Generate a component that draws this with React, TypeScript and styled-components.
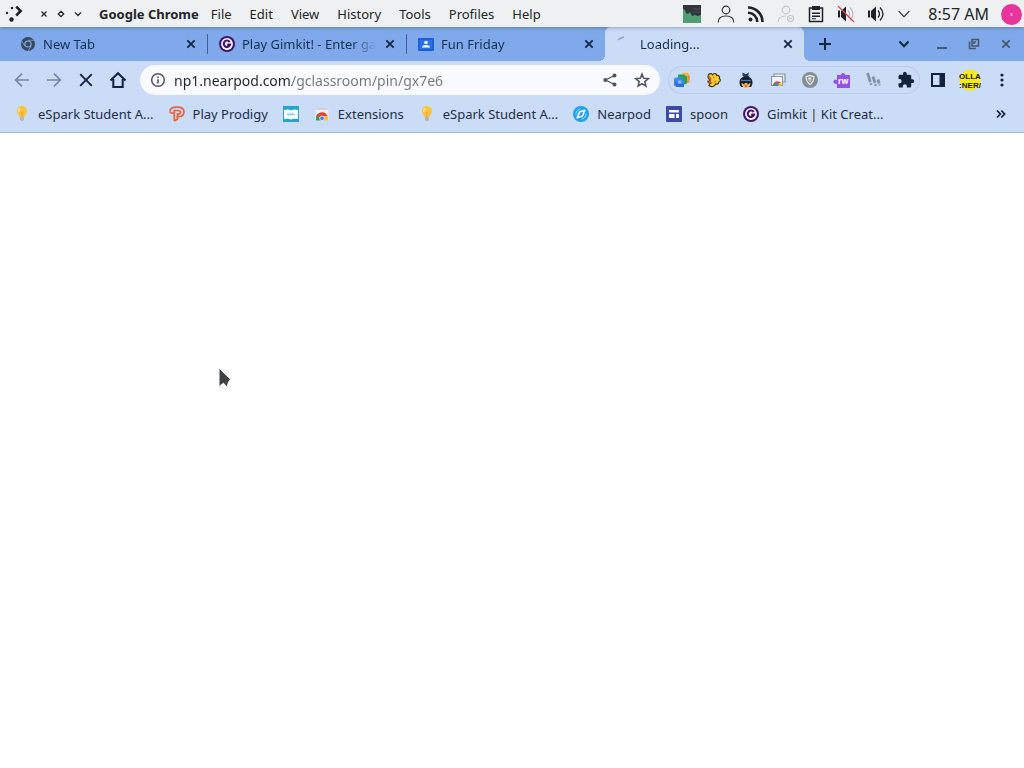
import type { ReactNode } from 'react'
import styled, { createGlobalStyle } from 'styled-components'

interface TabData {
  title: string
  icon: ReactNode
  active?: boolean
}

interface BookmarkData {
  label?: string
  name: string
  icon: ReactNode
}

// ---------- icons ----------

const ChromeIcon = () => (
  <svg width="16" height="16" viewBox="0 0 16 16">
    <circle cx="8" cy="8" r="7" fill="#34485f" />
    <path d="M8 4.200h6.500M4.700 9.900L1.700 4.700M11.300 9.900L8.200 15" stroke="#7ba3e3" strokeWidth=".8" />
    <circle cx="8" cy="8" r="3.600" fill="#8db2ea" />
    <circle cx="8" cy="8" r="2.500" fill="#34485f" />
  </svg>
)

const GimkitIcon = () => (
  <svg width="16" height="16" viewBox="0 0 16 16">
    <circle cx="8" cy="8" r="8" fill="#43156f" />
    <circle cx="8" cy="8" r="5.900" fill="#fff" />
    <path d="M10.700 6.100A3.200 3.200 0 1 0 11 8.600H8.200" fill="none" stroke="#43156f" strokeWidth="2.200" />
  </svg>
)

const ClassroomIcon = () => (
  <svg width="16" height="16" viewBox="0 0 16 16">
    <rect y="2" width="16" height="13" rx="1" fill="#1a62d6" />
    <rect x="2" y="4" width="12" height="9" fill="#2673e8" />
    <circle cx="8" cy="6.500" r="1.800" fill="#fff" />
    <path d="M4 11.500c0-2 2-2.600 4-2.600s4 .6 4 2.600z" fill="#fff" />
  </svg>
)

const SpinnerIcon = () => (
  <svg width="16" height="16" viewBox="0 0 16 16">
    <path d="M1 4Q3 2 7 1" fill="none" stroke="#8ba8da" strokeWidth="1.400" />
  </svg>
)

const BulbIcon = () => (
  <svg width="16" height="16" viewBox="0 0 16 16">
    <path d="M8 0C4.800 0 3 2.300 3 5c0 2.200 1.500 3.600 2.400 6h5.200C11.500 8.600 13 7.200 13 5c0-2.700-1.800-5-5-5z" fill="#fbc440" />
    <path d="M6 2.200C5 3 4.600 4.300 5 6" stroke="#ffe59a" strokeWidth="1.500" fill="none" />
    <path d="M8 6v5" stroke="#f19b2d" strokeWidth="1" />
    <path d="M6 11h4v2.500L9 15H7l-1-1.500z" fill="#b5b9bf" />
  </svg>
)

const ProdigyIcon = () => (
  <svg width="16" height="16" viewBox="0 0 16 16" fill="none" stroke="#ea6238">
    <path d="M1 5.500C1 2.500 4 1.200 8 1.200c4.300 0 7 1.300 7 4.500 0 3.300-2.700 5-6 5" strokeWidth="1.700" />
    <path d="M1 5.500c.2 1.800 1.800 2 4 1.200" strokeWidth="1.600" />
    <path d="M5.300 15V4.500h3.400c1.800 0 2.800.6 2.800 1.700S10.600 7.900 9 7.900H8.400v5.300L5.300 15" strokeWidth="1.700" />
  </svg>
)

const SkillsIcon = () => (
  <svg width="16" height="16" viewBox="0 0 16 16">
    <rect width="16" height="16" fill="#25a5c8" />
    <path d="M1 4C4 3 6.500 3.300 8 4.500 9.500 3.300 12 3 15 4v9c-3-.6-5.500-.3-7 .8-1.500-1.100-4-1.400-7-.8z" fill="#fff" />
    <path d="M4 8.500h8M5 7v2.500M7 6.500v3M9.500 6.500v3" stroke="#8bcfe0" strokeWidth="1" />
  </svg>
)

const WebStoreIcon = () => (
  <svg width="16" height="16" viewBox="0 0 16 16">
    <path d="M5 5V2.500h6V5" stroke="#c9ccd3" strokeWidth="1.200" fill="none" />
    <path d="M1.500 4h13v10.500h-13z" fill="#eceef2" />
    <path d="M2 13a6 6 0 0 1 11.500-3H8z" fill="#e2412f" />
    <path d="M2 14.500V12l2-3 3 5.500z" fill="#2f9e50" />
    <path d="M8 10h5.700c.5 1.500.4 3-.2 4.500H7.500z" fill="#f7bf2e" />
    <circle cx="8" cy="12.300" r="2.300" fill="#3f7ee8" stroke="#fff" strokeWidth=".7" />
  </svg>
)

const NearpodIcon = () => (
  <svg width="16" height="16" viewBox="0 0 16 16">
    <circle cx="8" cy="8" r="8" fill="#1ba1ee" />
    <path d="M6.500 6L11.800 4.200 9.500 10 4.200 11.800z" fill="none" stroke="#fff" strokeWidth="1.600" strokeLinejoin="round" />
    <path d="M3 8.500A5 5 0 0 1 7.500 3M13 7.500A5 5 0 0 1 8.500 13" fill="none" stroke="#b5e3fc" />
  </svg>
)

const SitesIcon = () => (
  <svg width="16" height="16" viewBox="0 0 16 16">
    <rect width="16" height="16" rx="1" fill="#3b4aa8" />
    <path d="M3 4h10v2.500H3zM3 8h5.500v4H3zM10 8h3v4h-3z" fill="#fff" />
  </svg>
)

const CloseIcon = ({ color = '#14273f' }: { color?: string }) => (
  <svg width="12" height="12" viewBox="0 0 12 12">
    <path d="M2.300 2.300l7.400 7.400M9.700 2.300L2.300 9.700" stroke={color} strokeWidth="1.800" />
  </svg>
)

const ArrowIcon = ({ forward }: { forward?: boolean }) => (
  <svg width="16" height="16" viewBox="0 0 16 16" fill="none" stroke="#7486a3" strokeWidth="1.700">
    {forward ? <path d="M1 8h13M8 1.700L14.300 8 8 14.300" /> : <path d="M15 8H2M8 1.700L1.700 8 8 14.300" />}
  </svg>
)

const StopIcon = () => (
  <svg width="16" height="16" viewBox="0 0 16 16">
    <path d="M2.200 2.200l11.600 11.600M13.800 2.200L2.200 13.800" stroke="#14233a" strokeWidth="1.900" />
  </svg>
)

const HomeIcon = () => (
  <svg width="18" height="18" viewBox="0 0 18 18" fill="none" stroke="#14233a" strokeWidth="2">
    <path d="M1.500 9.500L9 2.200l7.500 7.300M4.300 8v8h9.400V8" />
  </svg>
)

const InfoIcon = () => (
  <svg width="16" height="16" viewBox="0 0 16 16">
    <circle cx="8" cy="8" r="6.300" fill="none" stroke="#50555c" strokeWidth="1.500" />
    <path d="M8 7.200v4.300M8 4.500v1.600" stroke="#50555c" strokeWidth="1.600" />
  </svg>
)

const ShareIcon = () => (
  <svg width="16" height="16" viewBox="0 0 16 16" fill="#50555c">
    <path d="M12.500 3.500L3.500 8l9 4.500" fill="none" stroke="#50555c" strokeWidth="1.300" />
    <circle cx="12.500" cy="3.500" r="2" />
    <circle cx="3.300" cy="8" r="2" />
    <circle cx="12.500" cy="12.500" r="2" />
  </svg>
)

const StarIcon = () => (
  <svg width="16" height="16" viewBox="0 0 16 16">
    <path d="M8 2l1.700 4.200 4.600.4-3.500 3 1.100 4.500L8 11.700l-3.900 2.400 1.100-4.500-3.500-3 4.600-.4z" fill="none" stroke="#50555c" strokeWidth="1.500" />
  </svg>
)

const ChevronIcon = ({ size = 12, color = '#14273f', weight = 2 }: { size?: number; color?: string; weight?: number }) => (
  <svg width={size} height={size} viewBox="0 0 12 12">
    <path d="M1.500 3.500L6 8.300l4.500-4.800" fill="none" stroke={color} strokeWidth={weight} />
  </svg>
)

const PlusIcon = () => (
  <svg width="14" height="14" viewBox="0 0 14 14">
    <path d="M7 1v12M1 7h12" stroke="#14273f" strokeWidth="2" />
  </svg>
)

const extensions: { name: string; icon: ReactNode }[] = [
  {
    name: 'Classroom copy',
    icon: (
      <svg width="18" height="18" viewBox="0 0 18 18">
        <path d="M9 2l6-.5 2 4-1 6-4 1z" fill="#f9b934" />
        <path d="M14.500 4l2.500 1.500-1 6-2 .5z" fill="#f0893a" />
        <path d="M5 3.500h6l3 2v7l-4 1.500H5z" fill="#27a257" />
        <path d="M2.500 6.500H8L11 9v7H3.500L1 14.500V8z" fill="#3f87ee" />
        <path d="M1 10l2.500 6H11v-3.500H5z" fill="#2a70db" />
        <path d="M5 9.500h3.500v3H5z" fill="#8dbbf7" />
      </svg>
    ),
  },
  {
    name: 'Pixel helper',
    icon: (
      <svg width="16" height="16" viewBox="0 0 16 16">
        <path
          d="M2.500 2.500c2-1.500 3.500-1 4 .3 1.500-2 4.200-1.600 4.200.7 2-.5 3.600 1 2.600 2.900 1.700 1.100 1.300 3.300-.6 3.600.1 1.800-1.700 2.700-3.200 1.900-.8 2.900-4 3.500-6.500 1.600.2-1.300.8-1.900 1.500-2.300-1.700 0-2.700-.8-2.500-2 1.400.2 2-.3 2.200-1.200C2.500 7 1.500 5 2.500 2.500z"
          fill="#fccb2d"
          stroke="#453519"
          strokeWidth="1.200"
        />
        <path d="M2.500 4l2 2.500v3L2.500 11" fill="none" stroke="#cf5427" strokeWidth="1.400" />
        <path d="M7 5l1.500.7M9.500 8.500L8.500 10" stroke="#a87a23" strokeWidth="1.200" />
      </svg>
    ),
  },
  {
    name: 'Ninja',
    icon: (
      <svg width="16" height="18" viewBox="0 0 16 18">
        <path d="M4.500 1.500L8 3.200l3-2-.8 3.500H12L9 7H7L4.500 4.500z" fill="#283b55" />
        <path d="M1.500 11.500C1.500 7.500 4.500 5.500 8 5.500s6.500 2 6.500 6c0 2.500-1 4-2 4.500h-9c-1-.5-2-2-2-4.500z" fill="#17202d" />
        <path d="M3.500 12h9c0 2.900-2 5-4.500 5s-4.500-2.100-4.500-5z" fill="#f2b45b" />
        <path d="M3 9.500h10" stroke="#54789e" strokeWidth="1.200" />
        <path d="M4.500 12l2.200 1M11.500 12l-2.200 1" stroke="#17202d" strokeWidth="1.300" />
        <path d="M6.500 14.500h3L8 16z" fill="#a5322c" />
      </svg>
    ),
  },
  {
    name: 'Screen share',
    icon: (
      <svg width="16" height="16" viewBox="0 0 16 16">
        <path d="M4 4V2h11v8h-2" fill="#e6ecf4" stroke="#7a9a90" strokeWidth="1.200" />
        <path d="M1.500 4.500h11v9h-11z" fill="#f4f5f7" stroke="#8d989f" strokeWidth="1.200" />
        <path d="M3 14a4.500 4.500 0 0 1 8-3H7z" fill="#de4935" />
        <path d="M3 14l1.500-3L7 14z" fill="#35a056" />
        <path d="M7 11h4.500v3H7z" fill="#f5bb35" />
        <circle cx="7" cy="12.500" r="1.800" fill="#3e7fe5" />
      </svg>
    ),
  },
  {
    name: 'Shield',
    icon: (
      <svg width="16" height="16" viewBox="0 0 16 16">
        <circle cx="8" cy="8" r="8" fill="#858e91" />
        <path d="M8 2.700l4.500 1.500c0 4.300-1.400 7-4.500 9-3.100-2-4.500-4.700-4.500-9z" fill="#eef0f2" />
        <path d="M8 4.800l2.700.9c0 2.400-.9 4-2.700 5.400-1.800-1.400-2.700-3-2.700-5.400z" fill="none" stroke="#858e91" strokeWidth="1.200" />
        <path d="M6.500 7.200L8 8.700l2-2.500" fill="none" stroke="#858e91" />
      </svg>
    ),
  },
  {
    name: 'Read and write',
    icon: (
      <svg width="18" height="18" viewBox="0 0 18 18">
        <path d="M4 4h4a2 2 0 1 1 4 0h5v13H4v-4.500a2.200 2.200 0 1 1 0-3.500z" fill="#9550e6" />
        <text x="5" y="13" fontFamily="Noto Sans" fontSize="8" fontWeight="700" fill="#fff">rw</text>
      </svg>
    ),
  },
  {
    name: 'Notes',
    icon: (
      <svg width="16" height="16" viewBox="0 0 16 16" fill="none" stroke="#8493a3" strokeWidth="2.800">
        <path d="M1.500 1l2.800 9M7 4.500l2 6.500M12 7.500l1.200 4" />
        <path d="M4.700 11.200l.5 1.600M9.300 12.200l.5 1.600M13.400 12.500l.3 1" strokeWidth="2.400" />
      </svg>
    ),
  },
  {
    name: 'Extensions',
    icon: (
      <svg width="18" height="18" viewBox="0 0 24 24">
        <path
          d="M20.500 11H19V7c0-1.100-.9-2-2-2h-4V3.500a2.500 2.500 0 0 0-5 0V5H4c-1.100 0-2 .9-2 2v3.800h1.500a2.700 2.700 0 0 1 0 5.400H2V20c0 1.100.9 2 2 2h3.800v-1.500a2.700 2.700 0 0 1 5.400 0V22H17c1.100 0 2-.9 2-2v-4h1.500a2.500 2.500 0 0 0 0-5z"
          fill="#14233a"
        />
      </svg>
    ),
  },
]

const trayIcons: { name: string; icon: ReactNode }[] = [
  {
    name: 'User',
    icon: (
      <svg width="18" height="18" viewBox="0 0 18 18" fill="none" stroke="#303437" strokeWidth="1.200">
        <circle cx="9" cy="5" r="3.800" />
        <path d="M1.200 17.500c0-4.500 3.300-6.500 7.800-6.500s7.800 2 7.800 6.500" />
      </svg>
    ),
  },
  {
    name: 'Feeds',
    icon: (
      <svg width="16" height="16" viewBox="0 0 16 16" fill="none" stroke="#202326" strokeWidth="2.600">
        <circle cx="2.500" cy="13.500" r="2" fill="#202326" stroke="none" />
        <path d="M0 6.800A9 9 0 0 1 9.200 16M0 1.500A14.500 14.500 0 0 1 14.500 16" />
      </svg>
    ),
  },
  {
    name: 'Account offline',
    icon: (
      <svg width="18" height="18" viewBox="0 0 18 18" fill="none" stroke="#c4c6c8" strokeWidth="1.200">
        <circle cx="9" cy="5" r="3.800" />
        <path d="M1.200 17c0-4.500 3.300-6 7.800-6" />
        <circle cx="13.500" cy="13.500" r="3" />
        <path d="M12 13.500h3" />
      </svg>
    ),
  },
  {
    name: 'Clipboard',
    icon: (
      <svg width="16" height="18" viewBox="0 0 16 18">
        <path d="M1.500 3h13v13.500h-13z" fill="none" stroke="#202326" strokeWidth="1.500" />
        <path d="M4 1h8v4H4zM4 7.500h8V9H4zM4 10.500h8V12H4zM4 13.200h4v1H4z" fill="#202326" />
      </svg>
    ),
  },
  {
    name: 'Microphone muted',
    icon: (
      <svg width="18" height="18" viewBox="0 0 18 18">
        <path d="M1 5.500h2v7H1zM4 6l5-4.500v15L4 12z" fill="#202326" />
        <path d="M11 5.500q3 3.500 0 7M13 2.500q6 6.500 0 13" fill="none" stroke="#b7b9bb" strokeWidth="1.200" />
        <path d="M1 1l16 16" stroke="#da4453" strokeWidth="1.300" />
      </svg>
    ),
  },
  {
    name: 'Volume',
    icon: (
      <svg width="18" height="18" viewBox="0 0 18 18">
        <path d="M1 5.500h2v7H1zM4 6l5-4.500v15L4 12z" fill="#202326" />
        <path d="M11 5.500q3 3.500 0 7M13 2.500q6 6.500 0 13" fill="none" stroke="#202326" strokeWidth="1.300" />
      </svg>
    ),
  },
]

// ---------- data ----------

const menus = ['File', 'Edit', 'View', 'History', 'Tools', 'Profiles', 'Help']

const tabs: TabData[] = [
  { title: 'New Tab', icon: <ChromeIcon /> },
  { title: 'Play Gimkit! - Enter game', icon: <GimkitIcon /> },
  { title: 'Fun Friday', icon: <ClassroomIcon /> },
  { title: 'Loading...', icon: <SpinnerIcon />, active: true },
]

const bookmarks: BookmarkData[] = [
  { name: 'eSpark', label: 'eSpark Student A...', icon: <BulbIcon /> },
  { name: 'Prodigy', label: 'Play Prodigy', icon: <ProdigyIcon /> },
  { name: 'Skills', icon: <SkillsIcon /> },
  { name: 'Extensions', label: 'Extensions', icon: <WebStoreIcon /> },
  { name: 'eSpark', label: 'eSpark Student A...', icon: <BulbIcon /> },
  { name: 'Nearpod', label: 'Nearpod', icon: <NearpodIcon /> },
  { name: 'spoon', label: 'spoon', icon: <SitesIcon /> },
  { name: 'Gimkit', label: 'Gimkit | Kit Creat...', icon: <GimkitIcon /> },
]

export default function App() {
  return (
    <Screen>
      <GlobalStyle />

      <MenuBar>
        <Launcher aria-label="Launcher">
          <svg width="18" height="18" viewBox="0 0 18 18" fill="#202326">
            <circle cx="7" cy="3" r="1.300" />
            <circle cx="2" cy="8" r="1.200" />
            <circle cx="6.500" cy="14.500" r="2.200" />
            <path d="M10.300 2.500l1.800-1.800L17.500 6l-5.400 5.400-1.800-1.800L13.700 6z" />
          </svg>
        </Launcher>
        <WindowButtons>
          <SmallButton aria-label="Close">
            <svg width="8" height="8" viewBox="0 0 8 8"><path d="M1.500 1.500l5 5M6.500 1.500l-5 5" stroke="#202326" strokeWidth="1.200" /></svg>
          </SmallButton>
          <SmallButton aria-label="Restore">
            <svg width="8" height="8" viewBox="0 0 8 8"><path d="M4 1.300L6.700 4 4 6.700 1.300 4z" fill="none" stroke="#202326" strokeWidth="1.300" /></svg>
          </SmallButton>
          <SmallButton aria-label="Minimize"><ChevronIcon size={8} color="#202326" /></SmallButton>
        </WindowButtons>
        <AppName>Google Chrome</AppName>
        <MenuList>
          {menus.map((m) => <MenuItem key={m}>{m}</MenuItem>)}
        </MenuList>
        <Tray>
          <Monitor aria-label="System load">
            <svg width="20" height="20" viewBox="0 0 20 20">
              <rect x="1" y="1" width="18" height="18" fill="#31363b" />
              <path d="M1 5l2 1 1 3 2 1 2-2 2 4 3-1 3 1 3-1v8H1z" fill="#4f9e74" />
              <path d="M11 5h7M11 8h7" stroke="#4b5055" />
            </svg>
          </Monitor>
          {trayIcons.map((t) => <TrayButton key={t.name} aria-label={t.name}>{t.icon}</TrayButton>)}
          <TrayButton aria-label="More" $narrow><ChevronIcon size={14} color="#303437" weight={1} /></TrayButton>
          <Clock>8:57 AM</Clock>
          <Avatar aria-label="Account">s</Avatar>
        </Tray>
      </MenuBar>

      <TabStrip>
        {tabs.map((t, i) => (
          <Tab key={t.title} $active={t.active} $divided={i > 0 && !t.active}>
            {t.icon}
            <TabTitle>{t.title}</TabTitle>
            <TabClose aria-label={`Close ${t.title}`}><CloseIcon /></TabClose>
          </Tab>
        ))}
        <NewTab aria-label="New tab"><PlusIcon /></NewTab>
        <StripControls>
          <StripButton aria-label="Search tabs" $wide><ChevronIcon /></StripButton>
          <StripButton aria-label="Minimize">
            <svg width="12" height="12" viewBox="0 0 12 12"><path d="M1 10h10" stroke="#47586a" strokeWidth="2" /></svg>
          </StripButton>
          <StripButton aria-label="Restore">
            <svg width="12" height="12" viewBox="0 0 12 12" fill="none" stroke="#47586a" strokeWidth="1.600">
              <path d="M4 1.500h6.500V8H4zM1.500 3.500v7H8M6 6V4h2" />
            </svg>
          </StripButton>
          <StripButton aria-label="Close window"><CloseIcon color="#47586a" /></StripButton>
        </StripControls>
      </TabStrip>

      <Toolbar>
        <ToolButton aria-label="Back"><ArrowIcon /></ToolButton>
        <ToolButton aria-label="Forward"><ArrowIcon forward /></ToolButton>
        <ToolButton aria-label="Stop"><StopIcon /></ToolButton>
        <ToolButton aria-label="Home"><HomeIcon /></ToolButton>
        <AddressBar>
          <ToolButton aria-label="Site information"><InfoIcon /></ToolButton>
          <UrlInput aria-label="Address" defaultValue="np1.nearpod.com/gclassroom/pin/gx7e6" spellCheck={false} />
          <ToolButton aria-label="Share"><ShareIcon /></ToolButton>
          <ToolButton aria-label="Bookmark"><StarIcon /></ToolButton>
        </AddressBar>
        <ExtensionGroup>
          {extensions.map((e) => <ToolButton key={e.name} aria-label={e.name}>{e.icon}</ToolButton>)}
        </ExtensionGroup>
        <ToolButton aria-label="Side panel">
          <svg width="16" height="16" viewBox="0 0 16 16">
            <path d="M2 2h12v12H2z" fill="none" stroke="#14233a" strokeWidth="2" />
            <path d="M9.500 2H14v12H9.500z" fill="#14233a" />
          </svg>
        </ToolButton>
        <ToolButton aria-label="Profile">
          <svg width="22" height="22" viewBox="0 0 22 22">
            <circle cx="11" cy="11" r="10.500" fill="#f7ea1e" />
            <text x="11" y="10" textAnchor="middle" fontFamily="Liberation Sans" fontSize="8" fontWeight="700" fill="#1c1c12">OLLA</text>
            <text x="11" y="19" textAnchor="middle" fontFamily="Liberation Sans" fontSize="8" fontWeight="700" fill="#1c1c12">:NER/</text>
          </svg>
        </ToolButton>
        <ToolButton aria-label="Menu">
          <svg width="4" height="14" viewBox="0 0 4 14" fill="#14233a">
            <circle cx="2" cy="2" r="1.600" />
            <circle cx="2" cy="7" r="1.600" />
            <circle cx="2" cy="12" r="1.600" />
          </svg>
        </ToolButton>
      </Toolbar>

      <BookmarkBar>
        {bookmarks.map((b, i) => (
          <Bookmark key={i} href="#" aria-label={b.name}>
            {b.icon}
            {b.label && <span>{b.label}</span>}
          </Bookmark>
        ))}
        <Overflow aria-label="More bookmarks">
          <svg width="10" height="10" viewBox="0 0 10 10">
            <path d="M1 1.500L4.300 5 1 8.500M5.300 1.500L8.600 5 5.300 8.500" fill="none" stroke="#14233a" strokeWidth="1.800" />
          </svg>
        </Overflow>
      </BookmarkBar>

      <Page>
        <Pointer width="14" height="22" viewBox="0 0 14 22">
          <path d="M1 1v18.500l4.500-3.300 3.500 4 1.500-5 2-3z" fill="#3f4245" stroke="#fff" strokeWidth="1" />
        </Pointer>
      </Page>
    </Screen>
  )
}

// ---------- styles ----------

const GlobalStyle = createGlobalStyle`
  * { box-sizing: border-box; }

  body {
    margin: 0;
    background: #fff;
    font-family: 'Noto Sans', sans-serif;
    font-size: 13px;
    color: #232629;
  }

  button {
    display: flex;
    align-items: center;
    justify-content: center;
    flex-shrink: 0;
    padding: 0;
    border: none;
    background: none;
    font: inherit;
    color: inherit;
  }

  svg { flex-shrink: 0; display: block; }
`

const Screen = styled.div`
  display: flex;
  flex-direction: column;
  min-height: 100vh;
`

const MenuBar = styled.header`
  display: flex;
  align-items: center;
  height: 27px;
  padding: 1px 2px 0 5px;
  background: #eff0f1;
  box-shadow: 0 0 4px rgba(20, 40, 80, 0.5);
  z-index: 1;
`

const Launcher = styled.button`
  width: 18px;
  height: 24px;
`

const WindowButtons = styled.div`
  display: flex;
  margin: 0 13px 0 12px;
`

const SmallButton = styled.button`
  width: 17px;
  height: 24px;
`

const AppName = styled.strong`
  white-space: nowrap;
`

const MenuList = styled.nav`
  display: flex;
  gap: 18px;
  margin-left: 12px;
`

const MenuItem = styled.button``

const Tray = styled.div`
  display: flex;
  align-items: center;
  margin-left: auto;
`

const Monitor = styled.button`
  width: 20px;
  margin-right: 9px;
`

const TrayButton = styled.button<{ $narrow?: boolean }>`
  width: ${(p) => (p.$narrow ? 26 : 30)}px;
  height: 24px;
`

const Clock = styled.time`
  margin: 0 12px 0 11px;
  font-size: 16px;
  line-height: 24px;
  white-space: nowrap;
`

const Avatar = styled.button`
  width: 21px;
  height: 21px;
  border-radius: 50%;
  background: #e8359c;
  color: #fbd0e8;
  font-size: 6px;
`

const TabStrip = styled.div`
  display: flex;
  align-items: center;
  height: 34px;
  padding: 0 2px 0 8px;
  background: #7fa9ea;
`

const Tab = styled.div<{ $active?: boolean; $divided?: boolean }>`
  position: relative;
  display: flex;
  align-items: center;
  flex: 0 1 199px;
  min-width: 0;
  height: ${(p) => (p.$active ? 34 : 20)}px;
  padding: 0 10px 0 11px;
  border-left: 1px solid ${(p) => (p.$divided ? '#3d5f94' : 'transparent')};
  border-radius: ${(p) => (p.$active ? '6px 6px 0 0' : '0')};
  background: ${(p) => (p.$active ? '#cbdcf7' : 'transparent')};
  color: #14304f;

  /* flared feet of the selected tab */
  &::before,
  &::after {
    content: ${(p) => (p.$active ? "''" : 'none')};
    position: absolute;
    bottom: 0;
    width: 6px;
    height: 6px;
  }
  &::before {
    left: -7px;
    background: radial-gradient(circle at 0 0, transparent 6px, #cbdcf7 6px);
  }
  &::after {
    right: -6px;
    background: radial-gradient(circle at 100% 0, transparent 6px, #cbdcf7 6px);
  }
`

const TabTitle = styled.span`
  flex: 1;
  min-width: 0;
  margin: 0 8px 0 7px;
  overflow: hidden;
  white-space: nowrap;
  mask-image: linear-gradient(to left, transparent, #000 24px);
`

const TabClose = styled.button`
  width: 12px;
  height: 16px;
`

const NewTab = styled.button`
  width: 28px;
  height: 28px;
  margin-left: 7px;
`

const StripControls = styled.div`
  display: flex;
  margin-left: auto;
`

const StripButton = styled.button<{ $wide?: boolean }>`
  width: ${(p) => (p.$wide ? 44 : 32)}px;
  height: 28px;
`

const Toolbar = styled.div`
  display: flex;
  align-items: center;
  gap: 4px;
  height: 38px;
  padding: 0 8px;
  background: #cbdcf7;
`

const ToolButton = styled.button`
  width: 28px;
  height: 28px;
`

const AddressBar = styled.div`
  display: flex;
  align-items: center;
  gap: 4px;
  flex: 1;
  min-width: 0;
  height: 30px;
  margin: 0 4px;
  padding: 0 4px;
  border-radius: 15px;
  background: #f8fafe;
`

// host part is dark, the path after it is grey
const UrlInput = styled.input`
  flex: 1;
  min-width: 0;
  height: 28px;
  padding: 0;
  margin-left: -2px;
  border: none;
  outline: none;
  font-family: inherit;
  font-size: 14px;
  color: transparent;
  background: linear-gradient(90deg, #24282d 118px, #73787f 118px);
  background-clip: text;
`

const ExtensionGroup = styled.div`
  display: flex;
  gap: 4px;
  border-radius: 14px;
  box-shadow: inset 0 0 0 1px #bccbe8;
`

const BookmarkBar = styled.nav`
  display: flex;
  align-items: center;
  gap: 15px;
  height: 34px;
  padding: 0 18px 4px 14px;
  background: #cbdcf7;
  border-bottom: 1px solid #a9b6cc;
`

const Bookmark = styled.a`
  display: flex;
  align-items: center;
  gap: 8px;
  color: #1d2f48;
  text-decoration: none;
  white-space: nowrap;
`

const Overflow = styled.button`
  margin-left: auto;
`

const Page = styled.main`
  position: relative;
  flex: 1;
  background: #fff;
`

const Pointer = styled.svg`
  position: absolute;
  left: 218px;
  top: 234px;
`
